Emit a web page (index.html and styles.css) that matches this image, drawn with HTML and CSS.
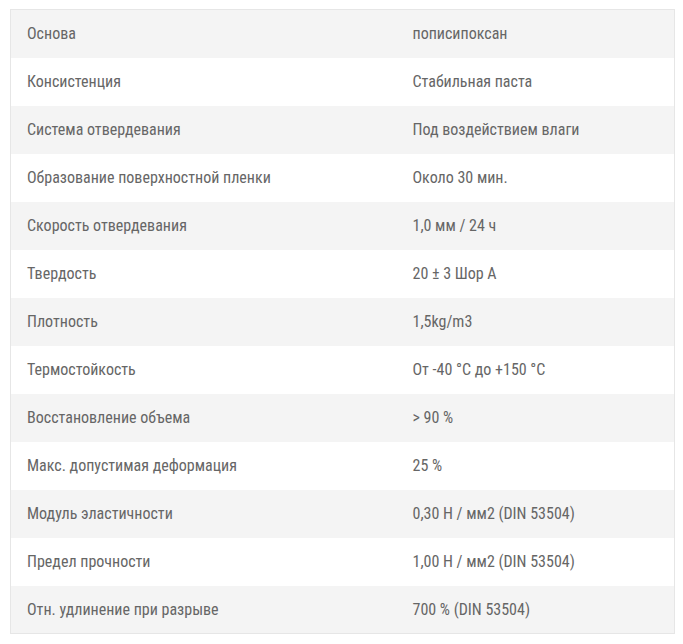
FILE: index.html
```html
<!DOCTYPE html>
<html lang="ru">
<head>
<meta charset="utf-8">
<link rel="stylesheet" href="styles.css">
</head>
<body>
<table class="specs">
<tbody>
<tr><td class="k">Основа</td><td class="v">пописипоксан</td></tr>
<tr><td class="k">Консистенция</td><td class="v">Стабильная паста</td></tr>
<tr><td class="k">Система отвердевания</td><td class="v">Под воздействием влаги</td></tr>
<tr><td class="k">Образование поверхностной пленки</td><td class="v">Около 30 мин.</td></tr>
<tr><td class="k">Скорость отвердевания</td><td class="v">1,0 мм / 24 ч</td></tr>
<tr><td class="k">Твердость</td><td class="v">20 ± 3 Шор А</td></tr>
<tr><td class="k">Плотность</td><td class="v">1,5kg/m3</td></tr>
<tr><td class="k">Термостойкость</td><td class="v">От -40 °C до +150 °C</td></tr>
<tr><td class="k">Восстановление объема</td><td class="v">&gt; 90 %</td></tr>
<tr><td class="k">Макс. допустимая деформация</td><td class="v">25 %</td></tr>
<tr><td class="k">Модуль эластичности</td><td class="v">0,30 Н / мм2 (DIN 53504)</td></tr>
<tr><td class="k">Предел прочности</td><td class="v">1,00 Н / мм2 (DIN 53504)</td></tr>
<tr><td class="k">Отн. удлинение при разрыве</td><td class="v">700 % (DIN 53504)</td></tr>
</tbody>
</table>
</body>
</html>
```
FILE: styles.css
```css
html, body { margin: 0; padding: 0; background: #fff; }
body { padding: 9px 8px 0 10px; }
.specs {
  width: 665px;
  border-collapse: collapse;
  border: 1px solid #e6e6e6;
  font-family: Roboto, "Noto Sans", sans-serif;
  font-stretch: condensed;
  font-size: 16px;
  color: #666;
}
.specs tr:nth-child(odd) { background: #f4f4f4; }
.specs td { height: 48px; padding: 0 16px; box-sizing: border-box; vertical-align: middle; }
.specs .k { width: 386px; }
```
